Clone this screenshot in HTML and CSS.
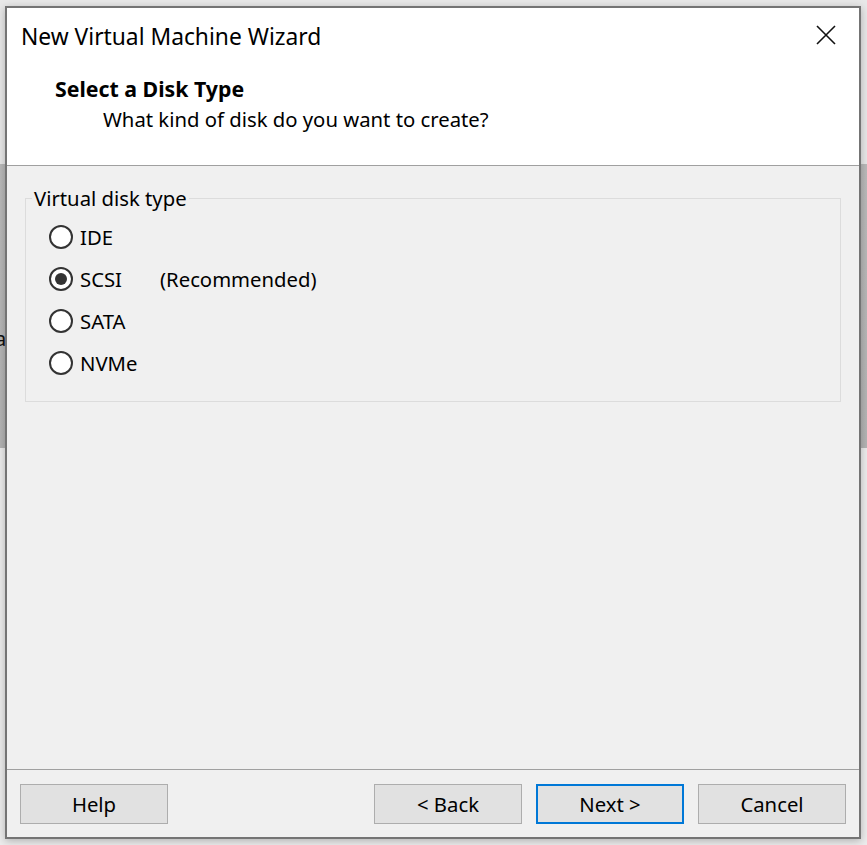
FILE: index.html
```html
<!DOCTYPE html>
<html>
<head>
<meta charset="utf-8">
<link rel="stylesheet" href="styles.css">
</head>
<body>
<span class="behind-a">a</span>
<div class="window">
  <div class="header">
    <div class="titlebar">
      <span class="title">New Virtual Machine Wizard</span>
      <svg class="close" width="20" height="20" viewBox="0 0 20 20"><path d="M1 1L19 19M19 1L1 19" stroke="#111" stroke-width="1.6" fill="none"/></svg>
    </div>
    <h2 class="heading">Select a Disk Type</h2>
    <p class="subheading">What kind of disk do you want to create?</p>
  </div>
  <div class="body">
    <fieldset class="group">
      <legend class="legend">Virtual disk type</legend>
      <div class="option"><span class="radio"></span><span class="label">IDE</span></div>
      <div class="option"><span class="radio checked"></span><span class="label">SCSI</span><span class="note">(Recommended)</span></div>
      <div class="option"><span class="radio"></span><span class="label">SATA</span></div>
      <div class="option"><span class="radio"></span><span class="label">NVMe</span></div>
    </fieldset>
  </div>
  <div class="footer">
    <button class="btn">Help</button>
    <div class="spacer"></div>
    <button class="btn">&lt; Back</button>
    <button class="btn primary">Next &gt;</button>
    <button class="btn">Cancel</button>
  </div>
</div>
</body>
</html>
```
FILE: styles.css
```css
* { box-sizing: border-box; }
html, body { margin: 0; padding: 0; }
body {
  width: 867px;
  height: 845px;
  overflow: hidden;
  position: relative;
  font-family: "Noto Sans", "Segoe UI", sans-serif;
  font-size: 20.3px;
  color: #000;
  background: linear-gradient(to bottom, #e8e8e8 0, #e8e8e8 164px, #bababa 164px, #b4b4b4 448px, #ececec 448px, #ececec 100%);
}
.behind-a {
  position: absolute;
  left: -5px;
  top: 325px;
  font-size: 20px;
  color: #111;
}
.window {
  position: relative;
  margin: 6px 0 0 5px;
  width: 856px;
  height: 833px;
  border: 2px solid #747474;
  background: #f0f0f0;
  display: flex;
  flex-direction: column;
  box-shadow: 0 2px 8px rgba(0,0,0,0.25);
}
.header {
  height: 158px;
  flex: none;
  background: #fff;
  border-bottom: 1px solid #a0a0a0;
  padding-top: 14px;
}
.titlebar {
  height: 30px;
  display: flex;
  align-items: center;
  justify-content: space-between;
  padding: 0 23px 0 14px;
}
.title {
  font-size: 22.8px;
  line-height: 30px;
}
.close { display: block; margin-top: -4px; }
.heading {
  margin: 23px 0 0 48px;
  font-size: 21.3px;
  font-weight: bold;
  line-height: 28px;
}
.subheading {
  margin: 2px 0 0 96px;
  line-height: 28px;
}
.body {
  flex: 1;
  padding: 18px 18px 0 18px;
}
.group {
  margin: 0;
  height: 218px;
  border: 1px solid #dcdcdc;
  padding: 4px 0 0 23px;
}
.legend {
  margin-left: -17px;
  padding: 0 2px;
  line-height: 28px;
}
.option {
  height: 42px;
  display: flex;
  align-items: center;
}
.radio {
  width: 24px;
  height: 24px;
  border: 2px solid #333;
  border-radius: 50%;
  background: #fff;
  display: flex;
  align-items: center;
  justify-content: center;
  flex: none;
}
.radio.checked::after {
  content: "";
  width: 12px;
  height: 12px;
  border-radius: 50%;
  background: #333;
}
.label {
  margin-left: 7px;
  min-width: 80px;
}
.footer {
  height: 68px;
  flex: none;
  border-top: 1px solid #a0a0a0;
  padding: 14px 13px 0 13px;
  display: flex;
  align-items: flex-start;
  gap: 14px;
}
.spacer { flex: 1; }
.btn {
  width: 148px;
  height: 40px;
  background: #e1e1e1;
  border: 1px solid #adadad;
  font-family: inherit;
  font-size: 20.3px;
  color: #000;
  padding: 0;
}
.primary {
  border: 2px solid #0078d7;
}
```
